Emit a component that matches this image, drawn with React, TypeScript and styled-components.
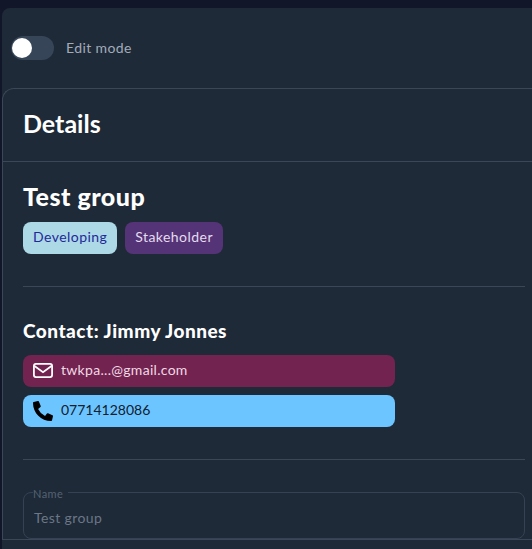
import { FunctionComponent } from 'react';
import styled, { createGlobalStyle } from 'styled-components';
import { FaPhoneAlt } from 'react-icons/fa';

const GlobalStyle = createGlobalStyle`
  html, body {
    margin: 0;
    height: 100%;
    overflow: hidden;
    background: #111729;
  }
  * {
    box-sizing: border-box;
  }
`;

const Page = styled.div`
  width: 532px;
  height: 549px;
  padding: 8px 0 0 2px;
  overflow: hidden;
  font-family: Lato, 'Open Sans', sans-serif;
`;

const Panel = styled.main`
  width: 560px;
  height: 600px;
  background: #1e2a38;
  border-radius: 8px 0 0 0;
`;

const EditBar = styled.div`
  display: flex;
  align-items: center;
  gap: 12px;
  height: 80px;
  padding: 0 0 0 9px;
  color: #a3abb8;
  font-size: 14px;
  letter-spacing: 0.4px;
`;

const EditLabel = styled.span`
  padding-bottom: 2px;
`;

const Track = styled.span`
  display: block;
  width: 43px;
  height: 24px;
  padding: 2px 1px;
  border-radius: 12px;
  background: #374558;
`;

const Thumb = styled.span`
  display: block;
  width: 20px;
  height: 20px;
  border-radius: 50%;
  background: #ffffff;
`;

const Card = styled.section`
  width: 560px;
  border: 1px solid #3b4757;
  border-right: 0;
  border-radius: 12px 0 0 0;
`;

const CardHeader = styled.header`
  height: 73px;
  display: flex;
  align-items: center;
  padding: 0 0 4px 20px;
  border-bottom: 1px solid #3b4757;
  color: #ffffff;
  font-size: 25px;
  font-weight: 700;
`;

const CardBody = styled.div`
  width: 522px;
  padding: 21px 0 0 20px;
`;

const GroupName = styled.h2`
  margin: 0;
  height: 28px;
  color: #ffffff;
  font-size: 25px;
  line-height: 26px;
  font-weight: 900;
  letter-spacing: 0.5px;
`;

const Tags = styled.div`
  display: flex;
  gap: 8px;
  margin-top: 11px;
`;

const Tag = styled.span<{ $bg: string; $fg: string }>`
  height: 32px;
  padding: 0 10px 3px;
  display: flex;
  align-items: center;
  border-radius: 8px;
  background: ${(p) => p.$bg};
  color: ${(p) => p.$fg};
  font-size: 14px;
  letter-spacing: 0.45px;
`;

const Rule = styled.hr<{ $top: number }>`
  margin: ${(p) => p.$top}px 0 0;
  border: 0;
  border-top: 1px solid #3b4757;
`;

const ContactTitle = styled.h3`
  margin: 33px 0 0;
  height: 22px;
  color: #ffffff;
  font-size: 19px;
  line-height: 22px;
  font-weight: 900;
  letter-spacing: 0.5px;
`;

const ContactRow = styled.div<{ $bg: string; $fg: string; $top: number }>`
  width: 372px;
  height: 32px;
  margin-top: ${(p) => p.$top}px;
  padding-left: 10px;
  display: flex;
  align-items: center;
  gap: 8px;
  border-radius: 8px;
  background: ${(p) => p.$bg};
  color: ${(p) => p.$fg};
  font-size: 14px;
`;

const RowText = styled.span<{ $spacing: number }>`
  padding-bottom: 3px;
  letter-spacing: ${(p) => p.$spacing}px;
`;

const MailSvg = styled.svg`
  margin-bottom: 1px;
`;

const Field = styled.fieldset`
  margin: 24px 0 0;
  width: 502px;
  height: 55px;
  padding: 0 10px;
  border: 1px solid #364253;
  border-radius: 8px;
  color: #6b7686;
  font-size: 14px;
  letter-spacing: 0.4px;
`;

const FieldLegend = styled.legend`
  padding: 4px 0 0;
  margin-left: -1px;
  width: 35px;
  font-size: 11px;
  line-height: 12px;
  color: #566273;
`;

const FieldValue = styled.div`
  margin-top: 9px;
`;

const MailIcon = () => (
  <MailSvg width='20' height='15' viewBox='0 0 20 15' fill='none' stroke='#ffffff' strokeWidth='1.8'>
    <rect x='0.9' y='0.9' width='18.2' height='13.2' rx='2' />
    <path d='M1.5 3l8.5 6.2L18.5 3' />
  </MailSvg>
);

const App: FunctionComponent = () => (
  <Page>
    <GlobalStyle />
    <Panel>
      <EditBar>
        <Track>
          <Thumb />
        </Track>
        <EditLabel>Edit mode</EditLabel>
      </EditBar>
      <Card>
        <CardHeader>Details</CardHeader>
        <CardBody>
          <GroupName>Test group</GroupName>
          <Tags>
            <Tag $bg='#add8e6' $fg='#1e2a9a'>
              Developing
            </Tag>
            <Tag $bg='#553377' $fg='#e4dcee'>
              Stakeholder
            </Tag>
          </Tags>
          <Rule $top={32} />
          <ContactTitle>Contact: Jimmy Jonnes</ContactTitle>
          <ContactRow $bg='#722350' $fg='#f0d9e4' $top={13}>
            <MailIcon />
            <RowText $spacing={0.3}>twkpa...@gmail.com</RowText>
          </ContactRow>
          <ContactRow $bg='#6cc5ff' $fg='#10202f' $top={8}>
            <FaPhoneAlt size={20} color='#000000' />
            <RowText $spacing={0}>07714128086</RowText>
          </ContactRow>
          <Rule $top={32} />
          <Field>
            <FieldLegend>Name</FieldLegend>
            <FieldValue>Test group</FieldValue>
          </Field>
        </CardBody>
      </Card>
    </Panel>
  </Page>
);

export default App;
